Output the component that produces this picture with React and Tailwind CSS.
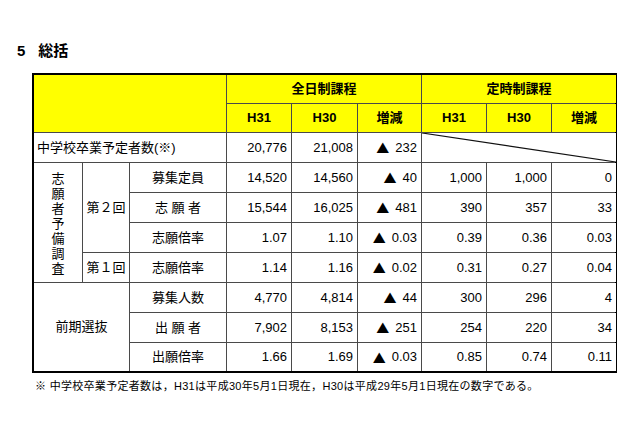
import React from "react";

const jp = { fontFamily: '"Liberation Sans", "Noto Sans CJK JP", sans-serif' };

const Cell = ({ className = "", children }) => (
  <div className={`bg-white flex items-center text-[13px] text-black ${className}`}>{children}</div>
);

const Num = ({ children, className = "" }) => (
  <Cell className={`justify-end pr-[4px] ${className}`}>{children}</Cell>
);

// ▲ in the CJK face is wider and heavier, as in the reference
const Tri = ({ v, row }) => (
  <Cell className={`justify-end pr-[4px] ${row}`}>
    <span className="text-[13px] mr-[6px] font-['Noto_Sans_CJK_JP'] leading-none">▲</span>
    {v}
  </Cell>
);

const Hd = ({ className = "", children }) => (
  <div className={`bg-[#ffff00] flex items-center justify-center font-bold text-[13px] text-black ${className}`}>
    {children}
  </div>
);

const rows = [
  { label: "募集定員", a: "14,520", b: "14,560", d: "40", c: "1,000", e: "1,000", f: "0" },
  { label: "志\u00a0願\u00a0者", a: "15,544", b: "16,025", d: "481", c: "390", e: "357", f: "33" },
  { label: "志願倍率", a: "1.07", b: "1.10", d: "0.03", c: "0.39", e: "0.36", f: "0.03" },
  { label: "志願倍率", a: "1.14", b: "1.16", d: "0.02", c: "0.31", e: "0.27", f: "0.04" },
  { label: "募集人数", a: "4,770", b: "4,814", d: "44", c: "300", e: "296", f: "4" },
  { label: "出\u00a0願\u00a0者", a: "7,902", b: "8,153", d: "251", c: "254", e: "220", f: "34" },
  { label: "出願倍率", a: "1.66", b: "1.69", d: "0.03", c: "0.85", e: "0.74", f: "0.11" },
];

const rowClass = [
  "row-start-4",
  "row-start-5",
  "row-start-6",
  "row-start-7",
  "row-start-8",
  "row-start-9",
  "row-start-10",
];

export default function App() {
  return (
    <div className="w-[640px] h-[426px] bg-white overflow-hidden" style={jp}>
      <div className="pl-[17px] pt-[43px] flex items-center font-bold text-[15px] text-black h-[60px]">
        <span>5</span>
        <span className="ml-[13px]">総括</span>
      </div>

      <div className="ml-[32px] mt-[13px] w-[585px] border-2 border-black bg-[#4a4a4a] grid gap-px grid-cols-[48px_46px_96px_64px_65px_63px_64px_64px_64px] grid-rows-[28px_28px_29px_29px_29px_29px_29px_29px_29px_28px]">
        <Hd className="col-start-1 col-span-3 row-start-1 row-span-2" />
        <Hd className="col-start-4 col-span-3 row-start-1">全日制課程</Hd>
        <Hd className="col-start-7 col-span-3 row-start-1">定時制課程</Hd>
        <Hd className="col-start-4 row-start-2">H31</Hd>
        <Hd className="col-start-5 row-start-2">H30</Hd>
        <Hd className="col-start-6 row-start-2">増減</Hd>
        <Hd className="col-start-7 row-start-2">H31</Hd>
        <Hd className="col-start-8 row-start-2">H30</Hd>
        <Hd className="col-start-9 row-start-2">増減</Hd>

        <Cell className="col-start-1 col-span-3 row-start-3 pl-[3px]">中学校卒業予定者数(※)</Cell>
        <Num className="col-start-4 row-start-3">20,776</Num>
        <Num className="col-start-5 row-start-3">21,008</Num>
        <Tri v="232" row="col-start-6 row-start-3" />
        <div className="col-start-7 col-span-3 row-start-3 bg-white relative">
          <svg className="absolute inset-0 w-full h-full" preserveAspectRatio="none" viewBox="0 0 100 100">
            <line x1="0" y1="0" x2="100" y2="100" stroke="#111" strokeWidth="1.2" vectorEffect="non-scaling-stroke" />
          </svg>
        </div>

        <Cell className="col-start-1 row-start-4 row-span-4 justify-center">
          <div className="flex flex-col items-center leading-[15px] text-[13px] pt-[2px]">
            {"志願者予備調査".split("").map((ch, i) => (
              <span key={i}>{ch}</span>
            ))}
          </div>
        </Cell>
        <Cell className="col-start-2 row-start-4 row-span-3 justify-center">第２回</Cell>
        <Cell className="col-start-2 row-start-7 justify-center">第１回</Cell>
        <Cell className="col-start-1 col-span-2 row-start-8 row-span-3 justify-center">前期選抜</Cell>

        {rows.map((r, i) => (
          <React.Fragment key={i}>
            <Cell className={`col-start-3 ${rowClass[i]} justify-center`}>{r.label}</Cell>
            <Num className={`col-start-4 ${rowClass[i]}`}>{r.a}</Num>
            <Num className={`col-start-5 ${rowClass[i]}`}>{r.b}</Num>
            <Tri v={r.d} row={`col-start-6 ${rowClass[i]}`} />
            <Num className={`col-start-7 ${rowClass[i]}`}>{r.c}</Num>
            <Num className={`col-start-8 ${rowClass[i]}`}>{r.e}</Num>
            <Num className={`col-start-9 ${rowClass[i]}`}>{r.f}</Num>
          </React.Fragment>
        ))}
      </div>

      <div className="ml-[35px] mt-[5px] text-[11px] tracking-[0.3px] text-black">
        ※ 中学校卒業予定者数は，H31は平成30年5月1日現在，H30は平成29年5月1日現在の数字である。
      </div>
    </div>
  );
}
